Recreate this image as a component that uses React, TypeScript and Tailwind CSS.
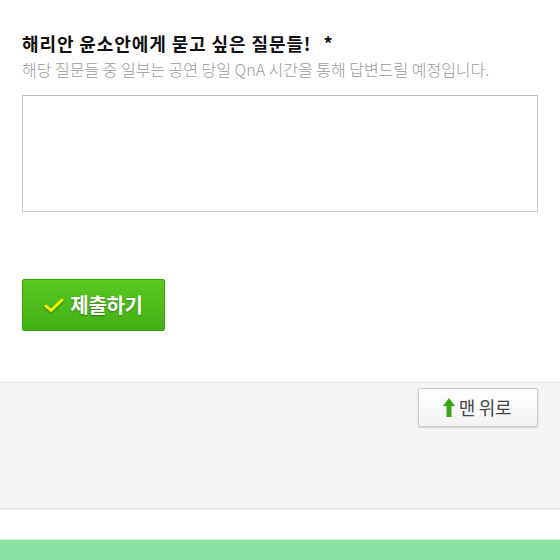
import React from "react";

const font = { fontFamily: '"Malgun Gothic", "Noto Sans CJK KR", "Noto Sans", sans-serif' };

function CheckMark() {
  return (
    <svg width="20" height="16" viewBox="0 0 20 16" className="drop-shadow-[0_1px_1px_rgba(0,0,0,0.35)]">
      <path d="M2 9 L7 13.5 L18 3" fill="none" stroke="#f4f000" strokeWidth="3" strokeLinecap="round" strokeLinejoin="round" />
    </svg>
  );
}

function UpArrow() {
  return (
    <svg width="12" height="19" viewBox="0 0 12 19">
      <path d="M6 0 L12 8 L8.5 8 L8.5 19 L3.5 19 L3.5 8 L0 8 Z" fill="#3aa514" />
    </svg>
  );
}

export default function App() {
  return (
    <div className="w-[560px] h-[560px] bg-white overflow-hidden flex flex-col" style={font}>
      <div className="px-[22px] pt-[31px] h-[382px]">
        <h2 className="text-[18px] font-bold text-[#111] leading-6 tracking-[0.9px]">
          해리안 윤소안에게 묻고 싶은 질문들!
          <span className="ml-[12px]">*</span>
        </h2>
        <p className="mt-[4px] text-[16px] text-[#9a9a9a] leading-5 tracking-[0px] font-light">
          해당 질문들 중 일부는 공연 당일 QnA 시간을 통해 답변드릴 예정입니다.
        </p>
        <textarea className="mt-[16px] block w-[516px] h-[117px] border border-[#c8c8c8] border-t-[#b8b8b8] resize-none outline-none" />
        <button className="mt-[67px] w-[143px] h-[52px] flex items-center justify-center gap-[6px] rounded-[2px] border border-[#3c9f10] bg-gradient-to-b from-[#5ac923] to-[#41b012] text-white text-[20px] font-bold tracking-[-0.3px] [text-shadow:0_1px_2px_rgba(0,0,0,0.35)]">
          <CheckMark />
          제출하기
        </button>
      </div>
      <div className="h-[128px] bg-[#f5f5f5] border-t border-[#e6e6e6] border-b-2 border-b-[#e9e9e9] flex justify-end pr-[22px] pt-[5px]">
        <button className="w-[120px] h-[39px] flex items-center justify-center gap-[4px] pr-[2px] bg-gradient-to-b from-white to-[#f3f3f3] border border-[#c9c9c9] rounded-[2px] shadow-[0_1px_2px_rgba(0,0,0,0.15)] text-[18px] text-[#444] tracking-[-0.3px]">
          <UpArrow />
          맨 위로
        </button>
      </div>
      <div className="h-[29px] bg-white" />
      <div className="flex-1 bg-[#8ae3a0] border-t border-[#c8f0d2]" />
    </div>
  );
}
